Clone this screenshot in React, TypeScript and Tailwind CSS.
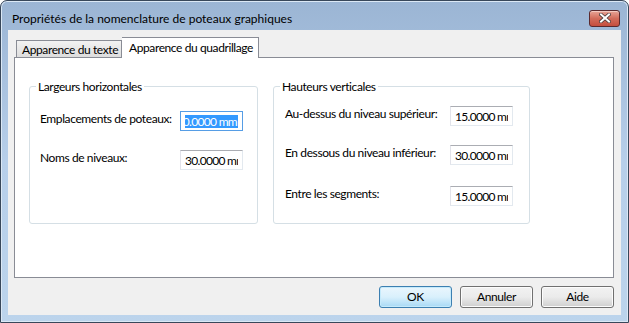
import React from 'react';

function Field({ value, focused }: { value: string; focused?: boolean }) {
  return (
    <div
      className={`flex h-[20px] w-[63px] shrink-0 items-center border bg-white px-[4px] ${
        focused ? 'border-[#569de5]' : 'border-[#abadb3] border-r-[#e3e9ef] border-b-[#e3e9ef] border-l-[#e2e3ea]'
      }`}
    >
      <div className={`flex min-w-0 flex-1 overflow-hidden whitespace-nowrap tracking-[-0.7px] ${focused ? 'justify-end' : ''}`}>
        <span className={`shrink-0 pr-px leading-[13px] ${focused ? 'bg-[#3399ff] text-white' : 'text-black'}`}>{value}</span>
      </div>
    </div>
  );
}

function Row({ label, labelWidth, value, focused, className = '' }: { label: string; labelWidth: string; value: string; focused?: boolean; className?: string }) {
  return (
    <div className={`flex items-start ${className}`}>
      <span className={`${labelWidth} shrink-0 whitespace-nowrap leading-[15px]`}>{label}</span>
      <Field value={value} focused={focused} />
    </div>
  );
}

function Group({ title, className, children }: { title: string; className: string; children: React.ReactNode }) {
  return (
    <div className={`relative rounded-[3px] border border-[#d5dfe5] ${className}`}>
      <span className="absolute -top-[8px] left-[6px] whitespace-nowrap bg-white px-[2px] leading-[15px]">{title}</span>
      {children}
    </div>
  );
}

function Button({ label, primary }: { label: string; primary?: boolean }) {
  return (
    <button
      type="button"
      className={`h-[22px] w-[73px] rounded-[3px] border text-black ${
        primary
          ? 'border-[#3c7fb1] bg-gradient-to-b from-[#eaf6fd] via-[#d9f0fc] to-[#a7d9f5] shadow-[inset_0_0_0_1px_#c5eafb]'
          : 'border-[#707070] bg-gradient-to-b from-[#f2f2f2] via-[#ebebeb] to-[#cfcfcf] shadow-[inset_0_0_0_1px_#fcfcfc]'
      }`}
    >
      {label}
    </button>
  );
}

export default function App() {
  return (
    <div className="h-[323px] w-[629px] font-['Lato',sans-serif] text-[12px] tracking-[-0.4px] text-black">
      <div className="flex h-full w-full flex-col rounded-t-[7px] border border-[#38475a] bg-gradient-to-b from-[#9bb5d4] via-[#b7cfea] to-[#bcd4ec] shadow-[inset_0_0_0_1px_#dbe8f5]">
        <div className="flex h-[29px] shrink-0 items-center pl-[11px] pr-[8px] pt-[5px]">
          <span className="flex-1 leading-[15px] tracking-normal">Propriétés de la nomenclature de poteaux graphiques</span>
          <button
            type="button"
            className="flex h-[17px] w-[31px] items-center justify-center rounded-[3px] border border-[#5b2a2e] bg-gradient-to-b from-[#e8a597] via-[#d26c5b] to-[#c54e3e] shadow-[inset_0_1px_0_#f3c9c0]"
          >
            <svg width="12" height="10" viewBox="0 0 12 10">
              <path d="M2 1.5 L10 8.5 M10 1.5 L2 8.5" stroke="#4a3a3a" strokeWidth="3.6" strokeLinecap="square" />
              <path d="M2 1.5 L10 8.5 M10 1.5 L2 8.5" stroke="#ffffff" strokeWidth="2" strokeLinecap="square" />
            </svg>
          </button>
        </div>

        <div className="mx-[7px] flex h-[285px] flex-col bg-[#f0f0f0] px-[6px] pt-[7px]">
          <div className="flex h-[20px] items-end pl-[2px]">
            <div className="flex h-[17px] w-[106px] items-center whitespace-nowrap border border-b-0 border-[#898c95] bg-gradient-to-b from-[#f2f2f2] to-[#dddddd] pl-[5px] pt-[1px]">
              Apparence du texte
            </div>
            <div className="relative z-10 -mb-px flex h-[21px] w-[137px] items-start whitespace-nowrap border border-b-0 border-l-0 border-[#898c95] bg-white pl-[7px] pt-[2px] leading-[15px]">
              Apparence du quadrillage
            </div>
          </div>

          <div className="flex h-[221px] w-[600px] gap-[15px] border border-[#898c95] bg-white pl-[14px] pt-[28px]">
            <Group title="Largeurs horizontales" className="h-[138px] w-[229px] pl-[10px] pt-[24px]">
              <Row label="Emplacements de poteaux:" labelWidth="w-[140px]" value="30.0000 mm" focused />
              <Row label="Noms de niveaux:" labelWidth="w-[140px]" value="30.0000 mm" className="mt-[19px]" />
            </Group>
            <Group title="Hauteurs verticales" className="h-[138px] w-[257px] pl-[11px] pt-[19px]">
              <Row label="Au-dessus du niveau supérieur:" labelWidth="w-[165px]" value="15.0000 mm" />
              <Row label="En dessous du niveau inférieur:" labelWidth="w-[165px]" value="30.0000 mm" className="mt-[19px]" />
              <Row label="Entre les segments:" labelWidth="w-[165px]" value="15.0000 mm" className="mt-[21px]" />
            </Group>
          </div>

          <div className="mt-[8px] flex w-[600px] justify-end gap-[8px]">
            <Button label="OK" primary />
            <Button label="Annuler" />
            <Button label="Aide" />
          </div>
        </div>
      </div>
    </div>
  );
}
